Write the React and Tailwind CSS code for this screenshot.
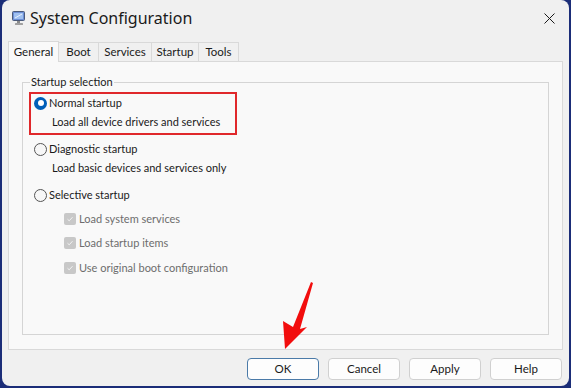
export default function App() {
  const font = { fontFamily: 'Lato, "Noto Sans", sans-serif' };
  return (
    <div className="w-[571px] h-[388px] bg-[#1b2d78] relative overflow-hidden" style={font}>
      <div className="absolute left-[2px] top-0 right-[2px] bottom-[2px] rounded-[8px] bg-[#f0f0f0] flex flex-col">
        {/* title bar */}
        <div className="h-[36px] flex items-center pl-[9px] pr-[13px] shrink-0">
          <svg width="16" height="16" viewBox="0 0 16 16">
            <rect x="1.5" y="1.5" width="12" height="9" rx="1" fill="#6d8fd6" stroke="#4a5a7a" strokeWidth="1" />
            <rect x="3" y="3" width="9" height="6" fill="#9fc0f0" />
            <path d="M4 8 L11 4" stroke="#e8f0ff" strokeWidth="1" />
            <rect x="6" y="11" width="3" height="2" fill="#8a8a8a" />
            <rect x="4" y="13" width="8" height="2" rx="0.5" fill="#a0a0a0" />
          </svg>
          <span className="ml-[3px] text-[16px] text-[#1a1a1a] leading-none" style={{ fontFamily: '"Noto Sans", sans-serif' }}>System Configuration</span>
          <div className="ml-auto w-[14px] h-[14px] flex items-center justify-center">
            <svg width="11" height="11" viewBox="0 0 11 11">
              <path d="M0.5 0.5 L10.5 10.5 M10.5 0.5 L0.5 10.5" stroke="#1a1a1a" strokeWidth="1" />
            </svg>
          </div>
        </div>
        {/* tabs */}
        <div className="flex items-end h-[25px] ml-[6px] shrink-0 text-[11.5px] text-[#1a1a1a]">
          <div className="h-[21px] w-[51px] bg-[#f9f9f9] border border-[#d9d9d9] border-b-0 flex items-center justify-center relative top-[1px] z-10">General</div>
          <div className="h-[19px] w-[40px] border border-[#d9d9d9] border-l-0 border-b-0 flex items-center justify-center">Boot</div>
          <div className="h-[19px] w-[53px] border border-[#d9d9d9] border-l-0 border-b-0 flex items-center justify-center">Services</div>
          <div className="h-[19px] w-[47px] border border-[#d9d9d9] border-l-0 border-b-0 flex items-center justify-center">Startup</div>
          <div className="h-[19px] w-[40px] border border-[#d9d9d9] border-l-0 border-b-0 flex items-center justify-center">Tools</div>
        </div>
        {/* pane */}
        <div className="ml-[6px] mr-[6px] h-[289px] bg-[#f9f9f9] border border-[#d9d9d9] pt-[20px] px-[13px] shrink-0">
          <div className="relative border border-[#d5d5d5] h-[253px] pt-[12px] pl-[11px] text-[11px] text-[#1a1a1a]">
            <div className="absolute left-[7px] -top-[8px] bg-[#f9f9f9] px-px leading-[14px]">Startup selection</div>
            <Radio checked label="Normal startup" />
            <div className="h-[16px] mt-[3px] pl-[18px] flex items-center">Load all device drivers and services</div>
            <div className="mt-[11px]"><Radio label="Diagnostic startup" /></div>
            <div className="h-[16px] mt-[3px] pl-[18px] flex items-center">Load basic devices and services only</div>
            <div className="mt-[11px]"><Radio label="Selective startup" /></div>
            <div className="mt-[8px]"><Check label="Load system services" /></div>
            <div className="mt-[8px]"><Check label="Load startup items" /></div>
            <div className="mt-[9px]"><Check label="Use original boot configuration" /></div>
          </div>
        </div>
        {/* buttons */}
        <div className="flex justify-end gap-[9px] pr-[7px] mt-[8px] text-[11.5px] text-[#1a1a1a]">
          <Btn primary>OK</Btn>
          <Btn>Cancel</Btn>
          <Btn>Apply</Btn>
          <Btn>Help</Btn>
        </div>
      </div>
      {/* annotations */}
      <div className="absolute left-[29px] top-[92px] w-[208px] h-[43px] border-2 border-[#e0282b]" />
      <svg className="absolute left-0 top-0" width="571" height="388" viewBox="0 0 571 388">
        <path d="M311 282 L313 283 L300 329 L307 327 L285 349 L283 321 L293 327 Z" fill="#f20d0d" />
      </svg>
    </div>
  );
}

function Radio({ checked, label }) {
  return (
    <div className="h-[16px] flex items-center">
      {checked ? (
        <div className="w-[13px] h-[13px] rounded-full bg-[#005fb8] flex items-center justify-center">
          <div className="w-[6px] h-[6px] rounded-full bg-white" />
        </div>
      ) : (
        <div className="w-[13px] h-[13px] rounded-full border border-[#555] bg-[#f7f7f7]" />
      )}
      <span className="ml-[2px]">{label}</span>
    </div>
  );
}

function Check({ label }) {
  return (
    <div className="h-[16px] flex items-center pl-[30px] text-[#6d6d6d]">
      <div className="w-[12px] h-[12px] rounded-[2px] bg-[#c8c8c8] flex items-center justify-center">
        <svg width="8" height="8" viewBox="0 0 8 8">
          <path d="M1.5 4.2 L3.2 5.8 L6.5 2.2" fill="none" stroke="#f3f3f3" strokeWidth="1" />
        </svg>
      </div>
      <span className="ml-[3px]">{label}</span>
    </div>
  );
}

function Btn({ primary, children }) {
  return (
    <div className={`w-[72px] h-[22px] rounded-[4px] bg-[#fdfdfd] flex items-center justify-center border ${primary ? 'border-[#4a7aa8]' : 'border-[#d0d0d0]'}`}>
      {children}
    </div>
  );
}
